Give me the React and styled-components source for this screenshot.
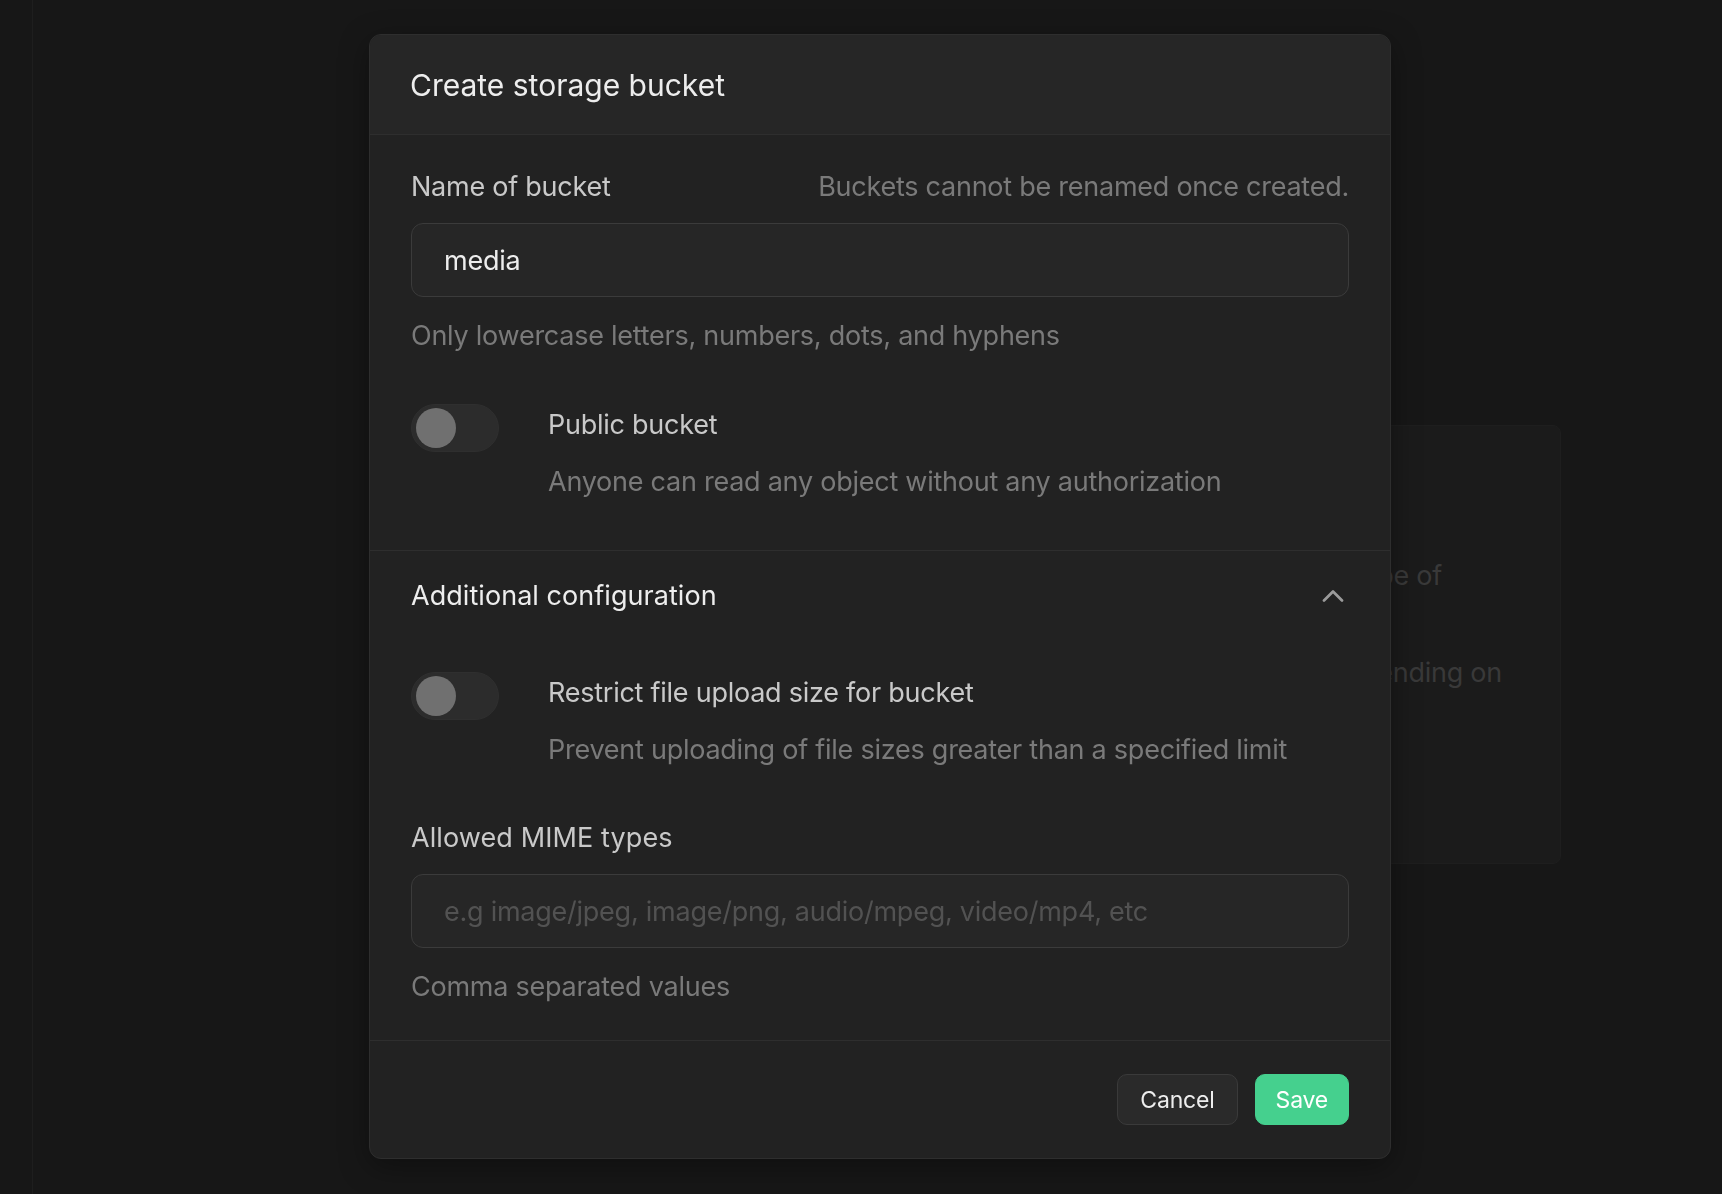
import React from 'react'
import styled, { createGlobalStyle } from 'styled-components'
import { ChevronUp } from 'lucide-react'

const GlobalStyle = createGlobalStyle`
  html, body {
    margin: 0;
    padding: 0;
    background: #171717;
  }
  body {
    font-family: Inter, "Noto Sans", sans-serif;
    letter-spacing: -0.25px;
    -webkit-font-smoothing: antialiased;
  }
  * {
    box-sizing: border-box;
  }
`

const App = () => {
  return (
    <>
      <GlobalStyle />
      <Page>
        <Sidebar />
        <Main>
          <BackCard>
            <BackText $inset={118}>Restrict the size and type of</BackText>
            <BackText $inset={58}>uploaded objects, depending on</BackText>
          </BackCard>
        </Main>
      </Page>

      <Modal>
        <ModalHeader>
          <ModalTitle>Create storage bucket</ModalTitle>
        </ModalHeader>

        <Section>
          <LabelRow>
            <Label>Name of bucket</Label>
            <Hint>Buckets cannot be renamed once created.</Hint>
          </LabelRow>
          <TextInput defaultValue="media" />
          <Helper>Only lowercase letters, numbers, dots, and hyphens</Helper>

          <ToggleRow>
            <Toggle>
              <Knob />
            </Toggle>
            <ToggleText>
              <Label>Public bucket</Label>
              <Hint>Anyone can read any object without any authorization</Hint>
            </ToggleText>
          </ToggleRow>
        </Section>

        <Section>
          <AccordionHead>
            <AccordionTitle>Additional configuration</AccordionTitle>
            <ChevronUp size={36} strokeWidth={1.8} color="#9b9b9b" />
          </AccordionHead>

          <ToggleRow $first>
            <Toggle>
              <Knob />
            </Toggle>
            <ToggleText>
              <Label>Restrict file upload size for bucket</Label>
              <Hint>Prevent uploading of file sizes greater than a specified limit</Hint>
            </ToggleText>
          </ToggleRow>

          <Field>
            <Label $wide>Allowed MIME types</Label>
            <TextInput placeholder="e.g image/jpeg, image/png, audio/mpeg, video/mp4, etc" />
            <Helper>Comma separated values</Helper>
          </Field>
        </Section>

        <Footer>
          <Button>Cancel</Button>
          <Button $primary>Save</Button>
        </Footer>
      </Modal>
    </>
  )
}

export default App

const Page = styled.div`
  display: flex;
  min-height: 100vh;
  background: #171717;
`

const Sidebar = styled.aside`
  width: 33px;
  flex-shrink: 0;
  border-right: 1px solid #1e1e1e;
`

const Main = styled.main`
  flex: 1;
  display: flex;
  justify-content: flex-end;
  align-items: flex-start;
  padding: 425px 161px 0 0;
`

const BackCard = styled.div`
  width: 560px;
  height: 439px;
  border-radius: 8px;
  background: #1b1b1b;
  border: 1px solid #1e1e1e;
  padding-top: 130px;
  display: flex;
  flex-direction: column;
  gap: 57px;
  overflow: hidden;
`

const BackText = styled.p`
  margin: 0 ${(p) => p.$inset}px 0 0;
  font-size: 27px;
  line-height: 40px;
  color: #393939;
  white-space: nowrap;
  text-align: right;
`

const Modal = styled.div`
  position: fixed;
  top: 34px;
  left: 369px;
  width: 1022px;
  background: #222222;
  border: 1px solid #2e2e2e;
  border-radius: 12px;
  overflow: hidden;
  box-shadow: 0 8px 30px rgba(0, 0, 0, 0.35);
`

const ModalHeader = styled.header`
  height: 100px;
  display: flex;
  align-items: center;
  padding: 0 40px;
  background: #262626;
  border-bottom: 1px solid #2e2e2e;
`

const ModalTitle = styled.h2`
  margin: 0;
  font-size: 30px;
  font-weight: 400;
  letter-spacing: 0;
  color: #ededed;
`

const Section = styled.section`
  display: flex;
  flex-direction: column;
  padding: 32px 41px 48px 41px;
  border-bottom: 1px solid #2e2e2e;

  & + & {
    padding-top: 25px;
    padding-bottom: 33px;
  }
`

const LabelRow = styled.div`
  display: flex;
  justify-content: space-between;
  align-items: center;
`

const Label = styled.span`
  font-size: 27px;
  line-height: 40px;
  letter-spacing: ${(p) => (p.$wide ? '0.1px' : '-0.25px')};
  color: #c9c9c9;
`

const Hint = styled.span`
  font-size: 27px;
  line-height: 40px;
  color: #7a7a7a;
`

const TextInput = styled.input`
  margin-top: 16px;
  width: 100%;
  height: 74px;
  padding: 0 32px;
  font-family: inherit;
  font-size: 27px;
  letter-spacing: -0.25px;
  color: #ededed;
  background: #262626;
  border: 1px solid #3b3b3b;
  border-radius: 12px;
  outline: none;

  &::placeholder {
    color: #525252;
  }
`

const Helper = styled.p`
  margin: 19px 0 0;
  font-size: 27px;
  line-height: 40px;
  color: #7a7a7a;
`

const ToggleRow = styled.div`
  display: flex;
  align-items: flex-start;
  gap: 49px;
  margin-top: ${(p) => (p.$first ? '56px' : '48px')};
`

const Toggle = styled.div`
  width: 88px;
  height: 48px;
  flex-shrink: 0;
  display: flex;
  align-items: center;
  padding: 0 4px;
  border-radius: 24px;
  background: #2c2c2c;
  border: 1px solid #2f2f2f;
`

const Knob = styled.span`
  width: 40px;
  height: 40px;
  border-radius: 50%;
  background: #707070;
`

const ToggleText = styled.div`
  display: flex;
  flex-direction: column;
  gap: 17px;
  padding-top: 1px;
`

const AccordionHead = styled.div`
  display: flex;
  justify-content: space-between;
  align-items: center;
  height: 40px;

  svg {
    margin-right: -2px;
  }
`

const AccordionTitle = styled.span`
  font-size: 27px;
  line-height: 40px;
  letter-spacing: 0.05px;
  color: #ededed;
`

const Field = styled.div`
  display: flex;
  flex-direction: column;
  margin-top: 48px;
`

const Footer = styled.footer`
  display: flex;
  justify-content: flex-end;
  gap: 17px;
  padding: 33px 41px 33px;
`

const Button = styled.button`
  height: 51px;
  padding: 0 ${(p) => (p.$primary ? '20px' : '22px')};
  font-family: inherit;
  font-size: 23px;
  letter-spacing: -0.2px;
  border-radius: 10px;
  cursor: pointer;
  color: ${(p) => (p.$primary ? '#ffffff' : '#ededed')};
  background: ${(p) => (p.$primary ? '#45d08e' : '#2a2a2a')};
  border: 1px solid ${(p) => (p.$primary ? '#45d08e' : '#3a3a3a')};
`
